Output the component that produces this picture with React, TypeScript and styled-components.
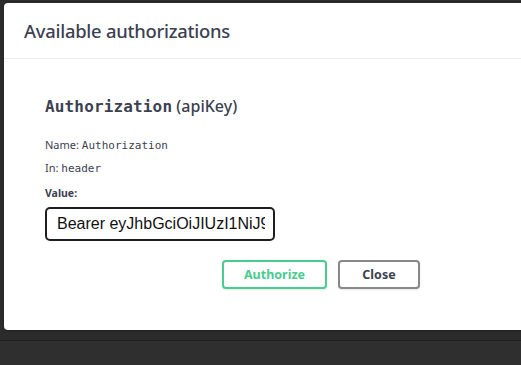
import React from "react";
import styled, { createGlobalStyle } from "styled-components";

const Global = createGlobalStyle`
  html, body { margin: 0; padding: 0; background: #2b2b2b; overflow: hidden; }
  * { box-sizing: border-box; }
`;

const Backdrop = styled.div`
  width: 521px;
  height: 365px;
  overflow: hidden;
  background: #2b2b2b;
  padding: 3px 0 0 4px;
  display: flex;
  flex-direction: column;
`;

const Modal = styled.div`
  width: 640px;
  height: 327px;
  background: #fff;
  border-radius: 4px;
  box-shadow: 0 1px 2px rgba(0, 0, 0, 0.3);
  display: flex;
  flex-direction: column;
  flex-shrink: 0;
`;

const Header = styled.div`
  height: 56px;
  border-bottom: 1px solid #ebebeb;
  display: flex;
  align-items: center;
  padding-left: 20px;
`;

const Title = styled.h3`
  margin: 0;
  font-family: "Noto Sans", sans-serif;
  font-weight: 500;
  font-size: 18.4px;
  color: #3b4151;
  letter-spacing: -0.25px;
`;

const Content = styled.div`
  padding: 37px 0 0 41px;
  display: flex;
  flex-direction: column;
`;

const Heading = styled.h4`
  margin: 0 0 20px;
  font-family: "Noto Sans", sans-serif;
  font-size: 16px;
  font-weight: 500;
  color: #3b4151;
  line-height: 20px;
`;

const Code = styled.code<{ $size: number; $bold?: boolean }>`
  font-family: "DejaVu Sans Mono", monospace;
  font-size: ${(p) => p.$size}px;
  font-weight: ${(p) => (p.$bold ? 700 : 400)};
  color: #3b4151;
  letter-spacing: ${(p) => (p.$bold ? "0.15px" : "0")};
`;

const Info = styled.p`
  margin: 0 0 6px;
  font-family: "Noto Sans", sans-serif;
  font-size: 11px;
  line-height: 16px;
  color: #3b4151;
`;

const Label = styled.label`
  margin-top: 3px;
  font-family: "Noto Sans", sans-serif;
  font-size: 10.5px;
  font-weight: 700;
  color: #3b4151;
  line-height: 14px;
`;

const Input = styled.input`
  margin-top: 7px;
  width: 230px;
  height: 34px;
  border: 2px solid #1e1e1e;
  border-radius: 5px;
  padding: 0 8px 0 10px;
  font-family: "Liberation Sans", Arial, sans-serif;
  font-size: 16px;
  color: #111;
  outline: none;
`;

const Actions = styled.div`
  display: flex;
  gap: 11px;
  margin-top: 19px;
  padding-left: 177px;
`;

const Button = styled.button<{ $tone: "green" | "gray" }>`
  height: 29px;
  padding: 0;
  width: ${(p) => (p.$tone === "green" ? "105px" : "82px")};
  background: #fff;
  border: 2px solid ${(p) => (p.$tone === "green" ? "#49cc90" : "#888")};
  border-radius: 4px;
  font-family: "Noto Sans", sans-serif;
  font-weight: 700;
  font-size: 12.5px;
  color: ${(p) => (p.$tone === "green" ? "#49cc90" : "#3b4151")};
  box-shadow: 0 1px 2px rgba(0, 0, 0, 0.1);
`;

const Line = styled.div`
  margin-top: 10px;
  height: 1px;
  background: #202020;
  flex-shrink: 0;
  margin-left: -4px;
`;

const Rest = styled.div`
  flex: 1;
  background: #2f2f2f;
  margin-left: -4px;
`;

export default function App() {
  return (
    <>
      <Global />
      <Backdrop>
        <Modal>
          <Header>
            <Title>Available authorizations</Title>
          </Header>
          <Content>
            <Heading>
              <Code $size={16} $bold>Authorization</Code> (apiKey)
            </Heading>
            <Info>
              Name: <Code $size={11}>Authorization</Code>
            </Info>
            <Info>
              In: <Code $size={11}>header</Code>
            </Info>
            <Label>Value:</Label>
            <Input defaultValue="Bearer eyJhbGciOiJIUzI1NiJ9.eyJzdWIiOiIxMjM0NTY3ODkwIn0" readOnly />
            <Actions>
              <Button $tone="green">Authorize</Button>
              <Button $tone="gray">Close</Button>
            </Actions>
          </Content>
        </Modal>
        <Line />
        <Rest />
      </Backdrop>
    </>
  );
}
